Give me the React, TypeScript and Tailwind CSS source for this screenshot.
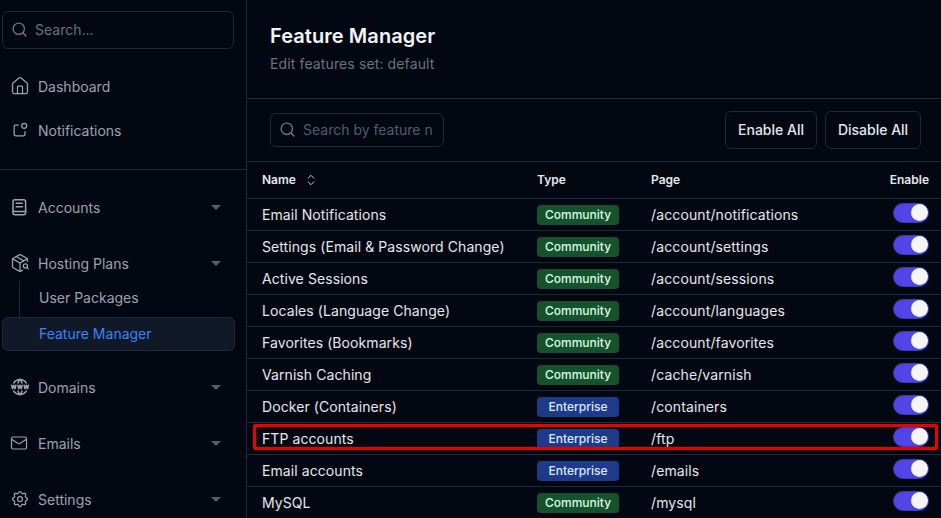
import { Search, ChevronsUpDown, PackageSearch, House, Mail } from 'lucide-react';
import { TbNotification, TbWorldWww, TbSettings } from 'react-icons/tb';
import type { ReactNode } from 'react';

type Feature = { name: string; type: 'Community' | 'Enterprise'; page: string; marked?: boolean };

const features: Feature[] = [
  { name: 'Email Notifications', type: 'Community', page: '/account/notifications' },
  { name: 'Settings (Email & Password Change)', type: 'Community', page: '/account/settings' },
  { name: 'Active Sessions', type: 'Community', page: '/account/sessions' },
  { name: 'Locales (Language Change)', type: 'Community', page: '/account/languages' },
  { name: 'Favorites (Bookmarks)', type: 'Community', page: '/account/favorites' },
  { name: 'Varnish Caching', type: 'Community', page: '/cache/varnish' },
  { name: 'Docker (Containers)', type: 'Enterprise', page: '/containers' },
  { name: 'FTP accounts', type: 'Enterprise', page: '/ftp', marked: true },
  { name: 'Email accounts', type: 'Enterprise', page: '/emails' },
  { name: 'MySQL', type: 'Community', page: '/mysql' },
];

function BookIcon() {
  return (
    <svg width="20" height="20" viewBox="0 0 20 20" fill="none" stroke="currentColor" strokeWidth="1.5" strokeLinecap="round">
      <rect x="3" y="2.8" width="12.6" height="15" rx="2" />
      <path d="M3 14.4h12.6M6.2 6.2h6.2M6.2 9.8h6.2" />
    </svg>
  );
}

function NavItem({ icon, label, caret = false, className = '' }: { icon: ReactNode; label: string; caret?: boolean; className?: string }) {
  return (
    <div className={`flex h-6 items-center pl-[10px] pr-[25px] text-[14px] text-[#9ca3af] ${className}`}>
      <span className="flex w-[28px] shrink-0 items-center text-[#9ca3af]">{icon}</span>
      <span className="flex-1">{label}</span>
      {caret && <span className="h-0 w-0 border-x-[5px] border-t-[5px] border-x-transparent border-t-[#565e6c]" />}
    </div>
  );
}

function Toggle() {
  return (
    <div className="mb-[3px] ml-auto flex h-5 w-9 items-start justify-end rounded-full border border-[#3f38b8] bg-[#4f46e5]">
      <div className="size-[17px] rounded-full bg-[#f5f5ff]" />
    </div>
  );
}

function Row({ feature }: { feature: Feature }) {
  return (
    <div className="relative grid h-8 grid-cols-[275px_114px_1fr_48px] items-center border-b border-[#1f2937] pl-[15px] pr-[12px] text-[14px] text-[#e5e7eb]">
      <span className="truncate tracking-[0.08px]">{feature.name}</span>
      <span
        className={`flex h-5 w-[82px] items-center justify-center rounded text-[12px] font-medium ${
          feature.type === 'Community' ? 'bg-[#14532d] text-[#dcfce7]' : 'bg-[#1e3a8a] text-[#dbeafe]'
        }`}
      >
        {feature.type}
      </span>
      <span className="tracking-[0.12px]">{feature.page}</span>
      <Toggle />
      {feature.marked && (
        <div className="absolute top-[1px] bottom-[4px] left-[6px] right-[3px] rounded-[2px] border-[3px] border-[#ee0000]" />
      )}
    </div>
  );
}

export default function App() {
  return (
    <div className="flex h-[518px] w-[941px] overflow-hidden bg-[#030712] font-['Inter',sans-serif]">
      <aside className="w-[247px] shrink-0 border-r border-[#1f2937]">
        <div className="px-[2px] pt-[11px]">
          <div className="flex h-[38px] w-[232px] items-center gap-[7px] rounded-md border border-[#1f2937] pb-[2px] pl-[8px]">
            <Search size={17} className="shrink-0 text-[#6b7280]" />
            <input
              placeholder="Search..."
              className="min-w-0 flex-1 bg-transparent text-[14px] outline-none placeholder:text-[#6b7280]"
            />
          </div>
        </div>
        <NavItem className="mt-[25px]" icon={<House size={20} strokeWidth={1.5} />} label="Dashboard" />
        <NavItem className="mt-5" icon={<TbNotification size={20} strokeWidth={1.5} />} label="Notifications" />
        <div className="mt-[27px] border-t border-[#1f2937]" />
        <NavItem className="mt-[25px]" icon={<BookIcon />} label="Accounts" caret />
        <NavItem className="mt-8" icon={<PackageSearch size={20} strokeWidth={1.5} />} label="Hosting Plans" caret />
        <div className="relative">
          <div className="absolute left-[19px] top-[6px] h-[36px] w-px bg-[#1f2937]" />
          <div className="flex h-[42px] items-center pl-[39px] pt-[3px] text-[14px] text-[#9ca3af]">User Packages</div>
          <div className="mx-[2px] flex h-[34px] w-[233px] items-center rounded-md border border-[#1f2937] bg-[#111827] pb-[2px] pl-[36px] text-[14px] text-[#3b82f6]">
            Feature Manager
          </div>
        </div>
        <NavItem className="mt-6" icon={<TbWorldWww size={20} strokeWidth={1.9} />} label="Domains" caret />
        <NavItem className="mt-8" icon={<Mail size={18} strokeWidth={1.6} />} label="Emails" caret />
        <NavItem className="mt-8" icon={<TbSettings size={20} strokeWidth={1.5} />} label="Settings" caret />
      </aside>

      <main className="min-w-0 flex-1">
        <header className="h-[99px] border-b border-[#1f2937] pl-[23px] pt-[23px]">
          <h1 className="text-[20px] leading-[26px] font-semibold tracking-[0.07px] text-[#f3f4f6]">Feature Manager</h1>
          <p className="mt-[5px] text-[14px] leading-5 tracking-[0.12px] text-[#6b7280]">Edit features set: default</p>
        </header>

        <div className="flex h-[63px] items-center justify-between border-b border-[#1f2937] pl-[23px] pr-[20px]">
          <div className="flex h-[34px] w-[174px] items-center gap-[7px] rounded-md border border-[#1f2937] pb-px pl-[8px]">
            <Search size={17} className="shrink-0 text-[#6b7280]" />
            <input
              placeholder="Search by feature name"
              className="w-[129px] bg-transparent text-[14px] outline-none placeholder:text-[#525b6b]"
            />
          </div>
          <div className="flex gap-2">
            <button className="h-[38px] w-[92px] rounded-md border border-[#1f2937] pb-[2px] text-[14px] font-medium text-[#e5e7eb]">Enable All</button>
            <button className="h-[38px] w-[96px] rounded-md border border-[#1f2937] pb-[2px] text-[14px] font-medium text-[#e5e7eb]">Disable All</button>
          </div>
        </div>

        <div className="grid h-[37px] grid-cols-[275px_114px_1fr_48px] items-center border-b border-[#1f2937] pl-[15px] pr-[12px] text-[12px] font-semibold text-[#e5e7eb]">
          <span className="flex items-center gap-[8px]">
            Name
            <ChevronsUpDown size={14} strokeWidth={1.6} className="text-[#d1d5db]" />
          </span>
          <span>Type</span>
          <span>Page</span>
          <span className="text-right">Enable</span>
        </div>

        {features.map((f) => (
          <Row key={f.name} feature={f} />
        ))}
      </main>
    </div>
  );
}
